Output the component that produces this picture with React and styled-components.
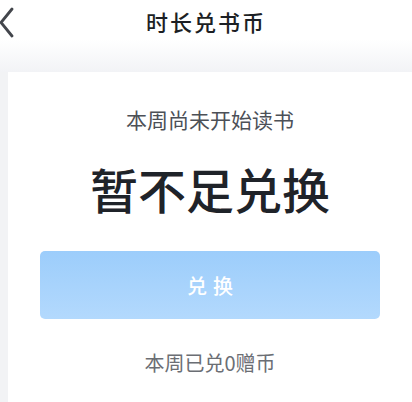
import React from 'react';
import styled, { createGlobalStyle } from 'styled-components';

const GlobalStyle = createGlobalStyle`
    html, body {
        margin: 0;
        padding: 0;
        background: #f2f3f5;
        font-family: "Noto Sans CJK SC", "Noto Sans", sans-serif;
    }
`;

const Page = styled.div`
    width: 412px;
    height: 402px;
    overflow: hidden;
    background: #f2f3f5;
`;

const Header = styled.div`
    height: 72px;
    display: grid;
    grid-template-columns: 1fr auto 1fr;
    align-items: start;
    background: linear-gradient(180deg, #ffffff 0%, #ffffff 55%, #f2f3f6 100%);
`;

const Back = styled.div`
    padding-top: 7px;
    display: flex;
`;

const Title = styled.h1`
    margin: 0;
    padding-top: 5px;
    font-size: 22px;
    line-height: 32px;
    font-weight: 500;
    letter-spacing: 2px;
    color: #1c1f24;
`;

const Card = styled.div`
    margin-left: 8px;
    height: 330px;
    background: #ffffff;
    display: flex;
    flex-direction: column;
    align-items: center;
    padding-top: 32px;
    box-sizing: border-box;
`;

const Hint = styled.p`
    margin: 0;
    font-size: 21px;
    line-height: 30px;
    color: #4c5057;
`;

const Status = styled.h2`
    margin: 24px 0 0;
    font-size: 48px;
    line-height: 60px;
    font-weight: 500;
    color: #1f2329;
`;

const ExchangeButton = styled.button`
    margin-top: 33px;
    width: 340px;
    height: 68px;
    border: none;
    border-radius: 5px;
    background: linear-gradient(180deg, #9ccdfb 0%, #b3d9fd 100%);
    color: #ffffff;
    font-family: inherit;
    font-size: 20px;
    letter-spacing: 6px;
    text-indent: 6px;
    font-weight: 500;
`;

const Summary = styled.p`
    margin: 30px 0 0;
    font-size: 20px;
    line-height: 28px;
    color: #6b6e74;
`;

const App = () => {
    return (
        <Page>
            <GlobalStyle />
            <Header>
                <Back>
                    <svg width="14" height="32" viewBox="0 0 14 32">
                        <polyline points="12,2 1,15.5 12,29" fill="none" stroke="#43464c" strokeWidth="2.8" strokeLinecap="round" strokeLinejoin="round" />
                    </svg>
                </Back>
                <Title>时长兑书币</Title>
                <div />
            </Header>
            <Card>
                <Hint>本周尚未开始读书</Hint>
                <Status>暂不足兑换</Status>
                <ExchangeButton>兑换</ExchangeButton>
                <Summary>本周已兑0赠币</Summary>
            </Card>
        </Page>
    );
};

export default App;
